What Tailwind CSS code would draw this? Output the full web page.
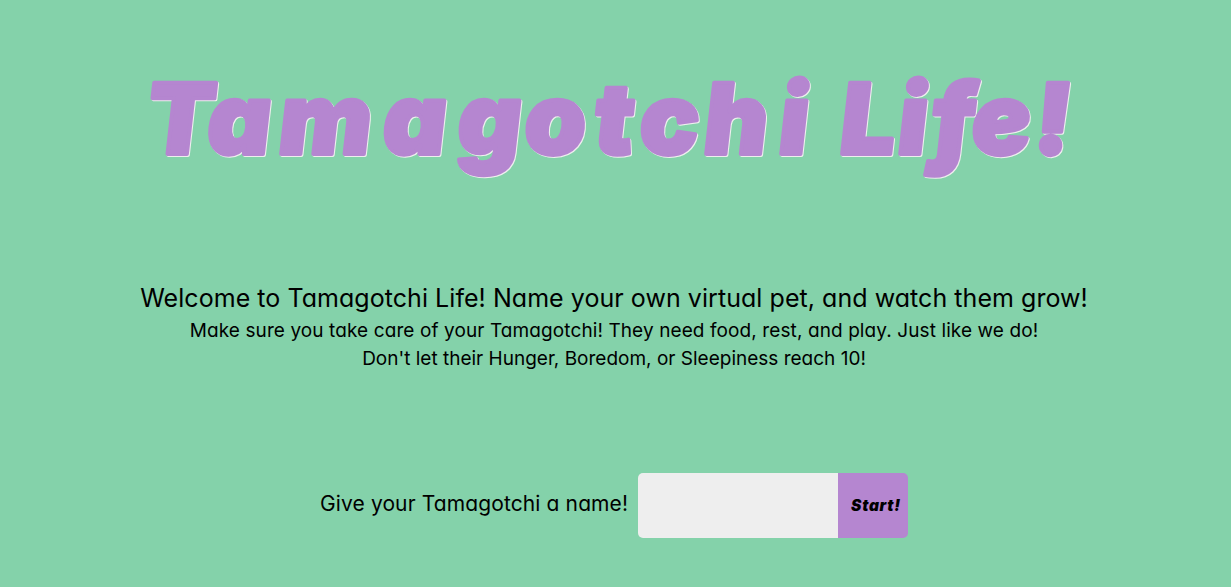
<!DOCTYPE html>
<html lang="en"><head><meta charset="utf-8"><title>Tamagotchi Life!</title>
<script src="https://cdn.jsdelivr.net/npm/@tailwindcss/browser@4"></script></head>
<body class="h-[587px] overflow-hidden bg-[#84d2aa] font-['Inter',sans-serif] text-black [font-feature-settings:'cv11']">
<header class="h-[278px]">
<h1>
<svg class="block h-[278px] w-full fill-[#b586d0] stroke-[#b586d0] text-[98px] font-black italic tracking-[6.4px] [filter:drop-shadow(1.5px_1.5px_0_#eeeeee)]" viewBox="0 0 1231 278" stroke-width="4" stroke-linejoin="round">
<g transform="translate(0 153.5) skewX(3)">
<text x="148" y="0" dx="0 -5 2 5 5 -3 2 1 -1 5">Tamagotchi</text>
<text x="842" y="0" dx="0 -4 -2 -8 -3">Life!</text>
</g>
</svg>
</h1>
</header>
<main>
<section class="flex flex-col items-center whitespace-nowrap pr-[3px] font-normal">
<h2 class="pt-px text-[25px] leading-[38px] tracking-[0.05px]">Welcome to Tamagotchi Life! Name your own virtual pet, and watch them grow!</h2>
<p class="text-[19px] leading-[27px] tracking-[0.1px]">Make sure you take care of your Tamagotchi! They need food, rest, and play. Just like we do!</p>
<p class="text-[19px] leading-[29px]">Don't let their Hunger, Boredom, or Sleepiness reach 10!</p>
</section>
<form class="mt-[100px] flex h-[65px] items-center pl-[320px]">
<label for="name" class="w-[318px] whitespace-nowrap pb-1 text-[21px] font-normal tracking-[0.12px]">Give your Tamagotchi a name!</label>
<input id="name" class="h-[65px] w-[200px] rounded-l-[5px] bg-[#eeeeee]">
<button type="button" class="h-[65px] w-[70px] rounded-r-[5px] bg-[#b586d0] pl-[6px] text-[15.5px] font-black italic tracking-[0.7px]">Start!</button>
</form>
</main>
</body></html>
